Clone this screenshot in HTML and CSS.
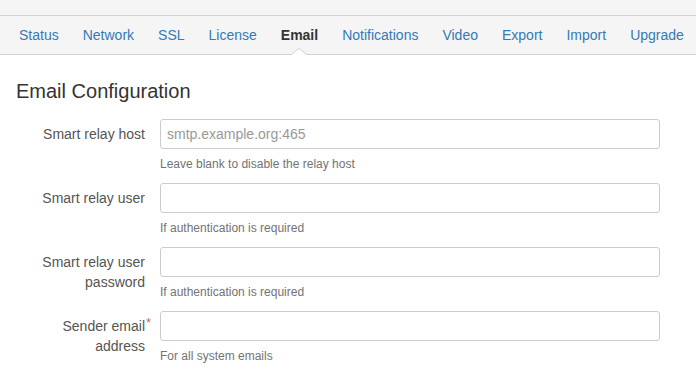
FILE: index.html
```html
<!DOCTYPE html>
<html>
<head>
<meta charset="utf-8">
<link rel="stylesheet" href="styles.css">
</head>
<body>
<div class="topbar"></div>
<nav class="tabs">
  <ul class="tab-list">
    <li class="tab"><a href="#">Status</a></li>
    <li class="tab"><a href="#">Network</a></li>
    <li class="tab"><a href="#">SSL</a></li>
    <li class="tab"><a href="#">License</a></li>
    <li class="tab active"><a href="#">Email</a></li>
    <li class="tab"><a href="#">Notifications</a></li>
    <li class="tab"><a href="#">Video</a></li>
    <li class="tab"><a href="#">Export</a></li>
    <li class="tab"><a href="#">Import</a></li>
    <li class="tab"><a href="#">Upgrade</a></li>
  </ul>
</nav>
<main class="content">
  <h1 class="title">Email Configuration</h1>
  <form class="form">
    <div class="row">
      <label class="label">Smart relay host</label>
      <div class="field">
        <input class="input" type="text" placeholder="smtp.example.org:465">
        <p class="help">Leave blank to disable the relay host</p>
      </div>
    </div>
    <div class="row">
      <label class="label">Smart relay user</label>
      <div class="field">
        <input class="input" type="text">
        <p class="help">If authentication is required</p>
      </div>
    </div>
    <div class="row">
      <label class="label">Smart relay user password</label>
      <div class="field">
        <input class="input" type="password">
        <p class="help">If authentication is required</p>
      </div>
    </div>
    <div class="row">
      <label class="label"><span class="req-wrap">Sender email<span class="req">*</span></span> address</label>
      <div class="field">
        <input class="input" type="text">
        <p class="help">For all system emails</p>
      </div>
    </div>
  </form>
</main>
</body>
</html>
```

FILE: styles.css
```css
* { box-sizing: border-box; }
html, body { margin: 0; padding: 0; background: #fff; }
body {
  font-family: "Liberation Sans", Arial, Helvetica, sans-serif;
  font-size: 14px;
  color: #333;
  width: 696px;
  height: 370px;
  overflow: hidden;
}
.topbar {
  height: 15px;
  background: #f5f5f5;
}
.tabs {
  background: #f5f5f5;
  border-top: 1px solid #d3d3d3;
  border-bottom: 1px solid #d3d3d3;
  height: 40px;
}
.tab-list {
  list-style: none;
  margin: 0;
  padding: 0 0 0 7px;
  display: flex;
  height: 38px;
}
.tab {
  position: relative;
  display: flex;
  align-items: center;
}
.tab a {
  display: block;
  padding: 0 12px;
  line-height: 38px;
  color: #337ab7;
  text-decoration: none;
  font-size: 14px;
}
.tab.active a {
  color: #333;
  font-weight: bold;
}
.tab.active::before,
.tab.active::after {
  content: "";
  position: absolute;
  left: 50%;
  margin-left: -9px;
  width: 0;
  height: 0;
  border-left: 9px solid transparent;
  border-right: 9px solid transparent;
}
.tab.active::before {
  bottom: -1px;
  border-bottom: 7px solid #d3d3d3;
}
.tab.active::after {
  bottom: -2px;
  border-bottom: 7px solid #fff;
}
.content {
  padding: 0 36px 0 16px;
}
.title {
  font-size: 20px;
  font-weight: normal;
  color: #333;
  margin: 24px 0 0 0;
  line-height: 24px;
}
.form {
  margin-top: 16px;
}
.row {
  display: grid;
  grid-template-columns: 129px 1fr;
  column-gap: 15px;
  margin-bottom: 10px;
}
.label {
  text-align: right;
  color: #555;
  font-size: 14px;
  line-height: 20px;
  padding-top: 5px;
}
.req-wrap {
  position: relative;
}
.req {
  position: absolute;
  right: -6px;
  top: -5px;
  color: #d9534f;
  font-size: 12px;
}
.field {
  display: flex;
  flex-direction: column;
}
.input {
  display: block;
  width: 100%;
  height: 30px;
  border: 1px solid #ccc;
  border-radius: 3px;
  padding: 0 6px;
  font-family: "Liberation Sans", Arial, Helvetica, sans-serif;
  font-size: 14px;
  color: #555;
  background: #fff;
}
.input::placeholder {
  color: #999;
}
.help {
  margin: 6px 0 0 0;
  font-size: 12px;
  line-height: 18px;
  color: #737373;
}
```
